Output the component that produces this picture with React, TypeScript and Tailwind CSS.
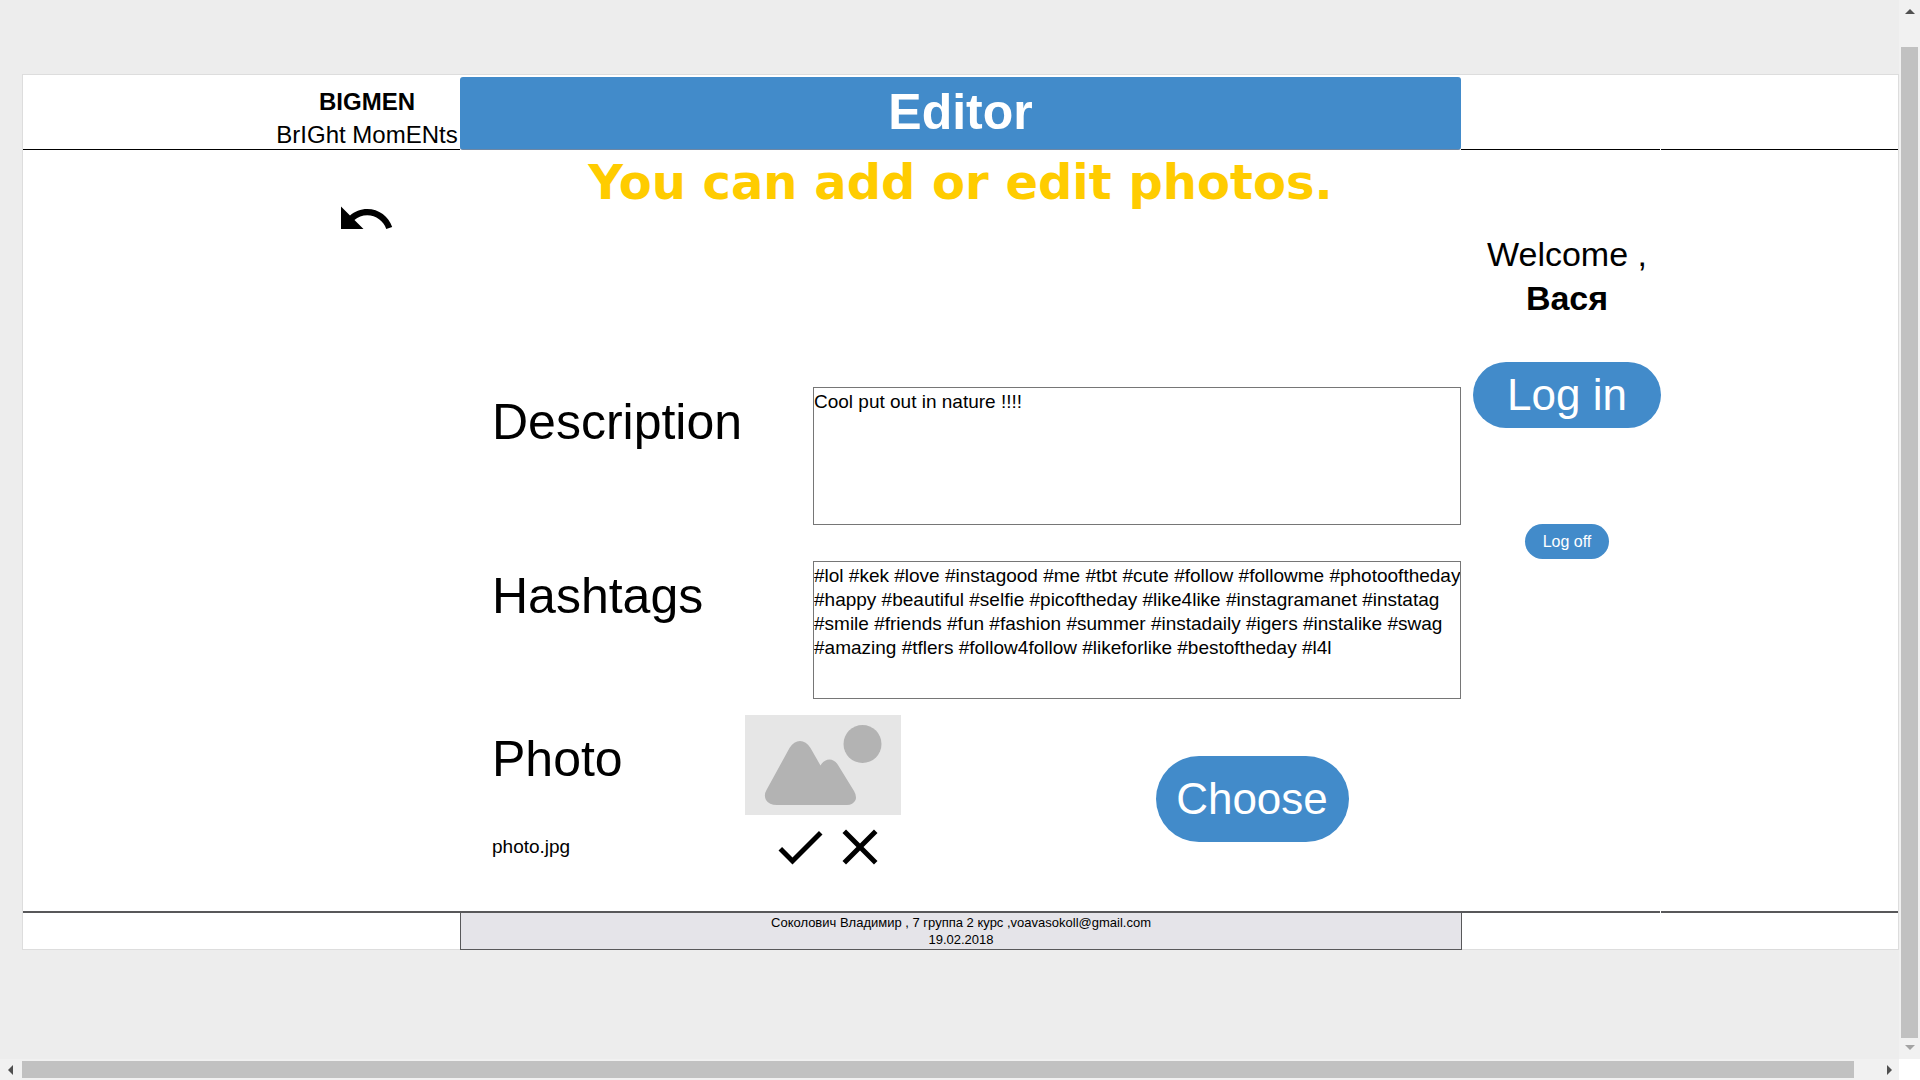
import React from "react";

const COLUMNS =
  "grid grid-cols-[minmax(0,237fr)_minmax(0,200fr)_minmax(0,1001fr)_minmax(0,200fr)_minmax(0,237fr)]";

const HASHTAGS = [
  "#lol #kek #love #instagood #me #tbt #cute #follow #followme #photooftheday",
  "#happy #beautiful #selfie #picoftheday #like4like #instagramanet #instatag",
  "#smile #friends #fun #fashion #summer #instadaily #igers #instalike #swag",
  "#amazing #tflers #follow4follow #likeforlike #bestoftheday #l4l",
].join("\n");

function Icon({ d }: { d: string }) {
  return (
    <svg viewBox="0 0 24 24" className="size-[60px]" fill="currentColor" aria-hidden="true">
      <path d={d} />
    </svg>
  );
}

function Arrow({ points, className }: { points: string; className: string }) {
  return (
    <svg viewBox="0 0 10 10" className={`size-[10px] shrink-0 ${className}`} fill="currentColor" aria-hidden="true">
      <polygon points={points} />
    </svg>
  );
}

function Header() {
  return (
    <header className={`h-[75px] ${COLUMNS}`}>
      <div className="h-[75px] border-b border-black" />
      <div className="h-[75px] border-b border-black pt-[10px] pl-[14px] text-center text-2xl leading-[33px] whitespace-nowrap">
        <p className="font-bold">BIGMEN</p>
        <p>BrIGht MomENts</p>
      </div>
      <h1 className="mt-[2px] flex h-[73px] items-center justify-center rounded-[3px] border-b border-[#6f87a3] bg-[#428bca] pb-[2px] text-[50px] leading-[60px] font-bold text-white">
        Editor
      </h1>
      <div className="mr-px h-[75px] border-b border-black" />
      <div className="h-[75px] border-b border-black" />
    </header>
  );
}

function Field({ id, label, value }: { id: string; label: string; value: string }) {
  return (
    <div className="flex">
      <label htmlFor={id} className="w-[321px] shrink-0 pt-[5px] text-[50px] leading-[60px]">
        {label}
      </label>
      <textarea
        id={id}
        defaultValue={value}
        className="h-[138px] min-w-0 flex-1 resize-none overflow-hidden border border-[#767676] bg-white py-[2px] text-[19px] leading-6 whitespace-pre outline-none"
      />
    </div>
  );
}

function Placeholder() {
  return (
    <svg viewBox="0 0 156 100" className="h-[100px] w-[156px]" role="img" aria-label="Photo preview">
      <rect width="156" height="100" fill="#e6e6e6" />
      <g fill="#b3b3b3">
        <circle cx="117.5" cy="29" r="19" />
        <path d="M21.5 75 L44.5 33 Q49 26 55 26 Q61 26 65.500 33 L75.500 50.500 Q79 44.500 84.500 44.500 Q89.500 44.500 93 50 L109 76 Q112 81 110.500 85 Q108 90 102 90 H32 Q24 90 21 85 Q18.500 80 21.500 75 Z" />
      </g>
    </svg>
  );
}

function Editor() {
  return (
    <section>
      <h2 className="pt-[2px] text-center font-['DejaVu_Sans',sans-serif] text-5xl leading-[60px] font-bold whitespace-nowrap text-[#ffcc00]">
        You can add or edit photos.
      </h2>
      <form className="mt-[175px] pl-8" onSubmit={(e) => e.preventDefault()}>
        <div className="flex flex-col gap-9">
          <Field id="description" label="Description" value="Cool put out in nature !!!!" />
          <Field id="hashtags" label="Hashtags" value={HASHTAGS} />
        </div>
        <div className="mt-4 flex items-start pb-[34px]">
          <div className="w-[253px] shrink-0 pt-[14px]">
            <p className="text-[50px] leading-[60px]">Photo</p>
            <p className="mt-[46px] text-[19px] leading-6">photo.jpg</p>
          </div>
          <div className="w-[156px] shrink-0">
            <Placeholder />
            <div className="mt-[2px] flex pl-[25px]">
              <button type="button" aria-label="Accept">
                <Icon d="M9 16.170L4.830 12l-1.420 1.410L9 19 21 7l-1.410-1.410z" />
              </button>
              <button type="button" aria-label="Cancel">
                <Icon d="M19 6.410L17.590 5 12 10.590 6.410 5 5 6.410 10.590 12 5 17.590 6.410 19 12 13.410 17.590 19 19 17.590 13.410 12z" />
              </button>
            </div>
          </div>
          <div className="flex flex-1 justify-center pt-[41px] pl-[142px]">
            <button type="button" className="h-[86px] w-[193px] rounded-full bg-[#428bca] text-[44px] text-white">
              Choose
            </button>
          </div>
        </div>
      </form>
    </section>
  );
}

function Account() {
  return (
    <aside className="flex flex-col items-center pt-[82px] pl-3 text-[34px] leading-[44px]">
      <p className="whitespace-nowrap">Welcome ,</p>
      <p className="font-bold">Вася</p>
      <button type="button" className="mt-[42px] h-[66px] w-full rounded-full bg-[#428bca] text-[44px] text-white">
        Log in
      </button>
      <button type="button" className="mt-24 flex h-[35px] w-[84px] items-center justify-center rounded-full bg-[#428bca] text-base text-white">
        Log off
      </button>
    </aside>
  );
}

function Footer() {
  return (
    <footer className={COLUMNS}>
      <div className="border-t-2 border-[#58585a]" />
      <div className="border-t-2 border-[#58585a]" />
      <div className="-mr-px -mb-px border border-t-2 border-[#58585a] bg-[#e5e4e9] py-px text-center text-[13px] leading-[17px]">
        <p>Соколович Владимир , 7 группа 2 курс ,voavasokoll@gmail.com</p>
        <p>19.02.2018</p>
      </div>
      <div className="mr-px border-t-2 border-[#58585a]" />
      <div className="border-t-2 border-[#58585a]" />
    </footer>
  );
}

export default function App() {
  return (
    <div className="grid h-screen grid-cols-[minmax(0,1fr)_21px] grid-rows-[minmax(0,1fr)_21px] bg-white font-['Liberation_Sans',Arial,sans-serif] text-black">
      <div className="overflow-hidden bg-[#ededed] pt-[74px] pl-[22px]">
        <div className="border border-[#dddddd] bg-white">
          <Header />
          <main className={COLUMNS}>
            <div />
            <div className="pt-[39px] text-center">
              <button type="button" aria-label="Back" className="ml-3">
                <Icon d="M12.500 8c-2.650 0-5.050.990-6.900 2.600L2 7v9h9l-3.620-3.620c1.390-1.160 3.160-1.880 5.120-1.880 3.540 0 6.550 2.310 7.600 5.500l2.370-.780C21.080 11.030 17.150 8 12.500 8z" />
              </button>
            </div>
            <Editor />
            <Account />
            <div />
          </main>
          <Footer />
        </div>
      </div>
      <div className="flex flex-col items-center bg-[#f1f1f1] py-[7px]" aria-hidden="true">
        <Arrow points="0,7 5,2 10,7" className="text-[#505050]" />
        <div className="mt-[30px] mb-1 w-[17px] flex-1 bg-[#c1c1c1]" />
        <Arrow points="0,3 5,8 10,3" className="text-[#a3a3a3]" />
      </div>
      <div className="flex items-center bg-[#f1f1f1] pr-[5px] pl-[6px]" aria-hidden="true">
        <Arrow points="7,0 2,5 7,10" className="text-[#505050]" />
        <div className="mr-[30px] ml-[6px] h-[17px] flex-1 bg-[#c1c1c1]" />
        <Arrow points="3,0 8,5 3,10" className="text-[#505050]" />
      </div>
    </div>
  );
}
